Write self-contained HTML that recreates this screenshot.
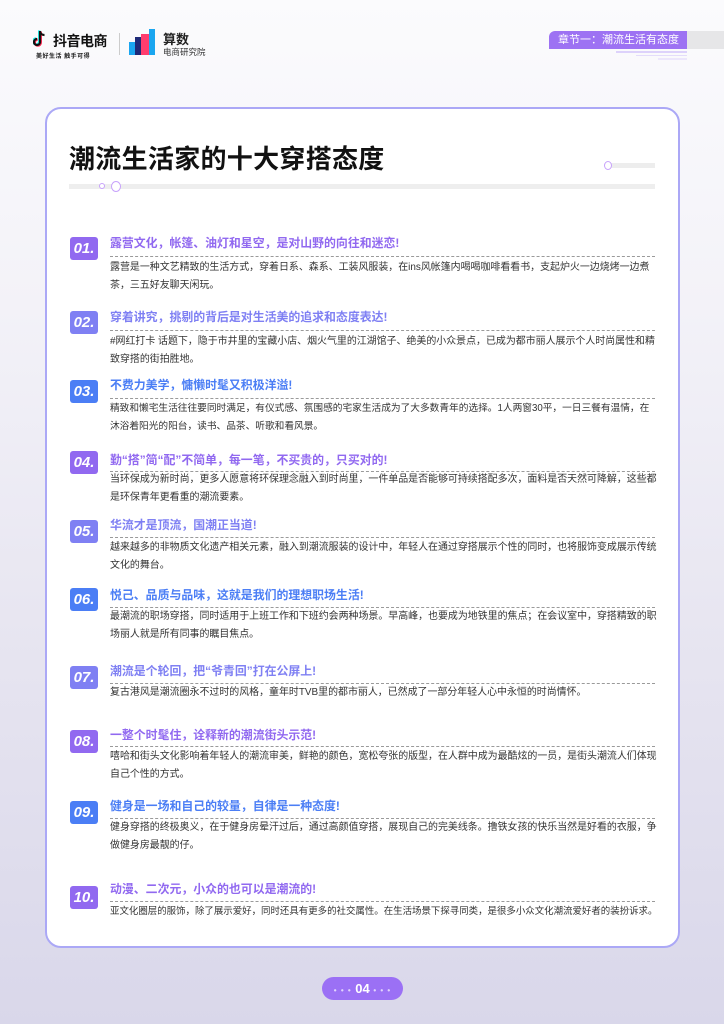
<!DOCTYPE html>
<html><head><meta charset="utf-8"><style>
*{margin:0;padding:0;box-sizing:border-box}
body{width:724px;height:1024px;overflow:hidden;position:relative;font-family:"Liberation Sans","Noto Sans CJK SC",sans-serif;background:linear-gradient(180deg,#fbfbfd 0%,#f3f2f8 30%,#e6e4f0 65%,#d9d7ea 100%)}
.abs{position:absolute}
.card{position:absolute;left:45px;top:107px;width:635px;height:841px;background:#fff;border:2px solid #aba8f6;border-radius:16px}
.badge{position:absolute;left:70px;width:28px;height:23px;border-radius:3px;color:#fff;font:italic bold 15px "Liberation Sans",sans-serif;text-align:center;line-height:23px}
.t{position:absolute;left:110px;font-size:11.9px;font-weight:bold;white-space:nowrap;line-height:14px}
.dl{position:absolute;left:110px;width:545px;border-top:1px dashed #9a9a9a}
.b{position:absolute;left:110px;font-size:9.95px;color:#333;line-height:18px;white-space:nowrap}
.p{background:#9169f0}.p2{background:#7f80f3}.bl{background:#4b7ef5}
.cp{color:#9169f0}.cp2{color:#7f80f3}.cbl{color:#4b7ef5}
</style></head><body>
<svg class="abs" style="left:33px;top:30px" width="14" height="17" viewBox="0 0 14 17"><path d="M7 1v11a3 3 0 1 1-3-3" fill="none" stroke="#25f4ee" stroke-width="2.4" transform="translate(-0.8,-0.6)"/><path d="M7 1v11a3 3 0 1 1-3-3" fill="none" stroke="#fe2c55" stroke-width="2.4" transform="translate(0.8,0.6)"/><path d="M7 1v11a3 3 0 1 1-3-3M7 1c0 2.5 2 4 4.5 4" fill="none" stroke="#111" stroke-width="2.2"/></svg>
<div class="abs" style="left:53px;top:31px;font-size:14px;font-weight:bold;color:#111;letter-spacing:-0.5px">抖音电商</div>
<div class="abs" style="left:36px;top:51px;font-size:6px;font-weight:bold;color:#222;letter-spacing:0.5px">美好生活 触手可得</div>
<div class="abs" style="left:119px;top:33px;width:1px;height:22px;background:#ccc"></div>
<svg class="abs" style="left:129px;top:29px" width="30" height="26" viewBox="0 0 30 26"><rect x="0" y="13" width="10" height="13" fill="#1aa6f0"/><rect x="6" y="8" width="10" height="18" fill="#1e2a78"/><rect x="12" y="5" width="10" height="21" fill="#ff3d6e"/><rect x="20" y="0" width="6" height="26" fill="#1aa6f0"/></svg>
<div class="abs" style="left:163px;top:29px;font-size:13px;font-weight:bold;color:#222">算数</div>
<div class="abs" style="left:163px;top:46px;font-size:8.5px;color:#333">电商研究院</div>
<div class="abs" style="left:680px;top:31px;width:44px;height:18px;background:#e6e6e8"></div>
<div class="abs" style="left:549px;top:31px;width:138px;height:18px;background:#9d72f3;border-radius:6px 0 0 0;color:#fff;font-size:11px;line-height:18px;padding-left:9px">章节一：潮流生活有态度</div>
<div class="abs" style="left:616px;top:51px;width:71px;height:2px;background:#ddd2fb"></div>
<div class="abs" style="left:636px;top:55px;width:51px;height:1px;background:#e4dcfb"></div>
<div class="abs" style="left:658px;top:58px;width:29px;height:2px;background:#ece6fc"></div>
<div class="card"></div>
<div class="abs" style="left:69px;top:139px;font-size:26px;font-weight:bold;color:#111;letter-spacing:0.3px">潮流生活家的十大穿搭态度</div>
<div class="abs" style="left:608px;top:163px;width:47px;height:5px;background:#ededed"></div>
<div class="abs" style="left:604px;top:161px;width:8px;height:9px;border:1.5px solid #c7a2fb;border-radius:50%;background:#fff"></div>
<div class="abs" style="left:69px;top:184px;width:586px;height:5px;background:#eeeeee"></div>
<div class="abs" style="left:99px;top:183px;width:6px;height:6px;border:1.2px solid #c7a2fb;border-radius:50%;background:#fff"></div>
<div class="abs" style="left:111px;top:181px;width:10px;height:11px;border:1.5px solid #c7a2fb;border-radius:50%;background:#fff"></div>

<div class="badge p" style="top:237px">01.</div>
<div class="t cp" style="top:236px">露营文化，帐篷、油灯和星空，是对山野的向往和迷恋!</div>
<div class="dl" style="top:256px"></div>
<div class="b" style="top:259px">露营是一种文艺精致的生活方式，穿着日系、森系、工装风服装，在ins风帐篷内喝喝咖啡看看书，支起炉火一边烧烤一边煮<br>茶，三五好友聊天闲玩。</div>

<div class="badge p2" style="top:311px">02.</div>
<div class="t cp2" style="top:310px">穿着讲究，挑剔的背后是对生活美的追求和态度表达!</div>
<div class="dl" style="top:330px"></div>
<div class="b" style="top:333px">#网红打卡 话题下，隐于市井里的宝藏小店、烟火气里的江湖馆子、绝美的小众景点，已成为都市丽人展示个人时尚属性和精<br>致穿搭的街拍胜地。</div>

<div class="badge bl" style="top:380px">03.</div>
<div class="t cbl" style="top:378px">不费力美学，慵懒时髦又积极洋溢!</div>
<div class="dl" style="top:398px"></div>
<div class="b" style="top:400px;font-size:9.7px">精致和懒宅生活往往要同时满足，有仪式感、氛围感的宅家生活成为了大多数青年的选择。1人两窗30平，一日三餐有温情，在<br>沐浴着阳光的阳台，读书、品茶、听歌和看风景。</div>

<div class="badge p" style="top:451px">04.</div>
<div class="t cp" style="top:453px">勤“搭”简“配”不简单，每一笔，不买贵的，只买对的!</div>
<div class="dl" style="top:471px"></div>
<div class="b" style="top:471px">当环保成为新时尚，更多人愿意将环保理念融入到时尚里，一件单品是否能够可持续搭配多次，面料是否天然可降解，这些都<br>是环保青年更看重的潮流要素。</div>

<div class="badge p2" style="top:520px">05.</div>
<div class="t cp2" style="top:518px">华流才是顶流，国潮正当道!</div>
<div class="dl" style="top:537px"></div>
<div class="b" style="top:539px">越来越多的非物质文化遗产相关元素，融入到潮流服装的设计中，年轻人在通过穿搭展示个性的同时，也将服饰变成展示传统<br>文化的舞台。</div>

<div class="badge bl" style="top:588px">06.</div>
<div class="t cbl" style="top:588px">悦己、品质与品味，这就是我们的理想职场生活!</div>
<div class="dl" style="top:607px"></div>
<div class="b" style="top:608px">最潮流的职场穿搭，同时适用于上班工作和下班约会两种场景。早高峰，也要成为地铁里的焦点；在会议室中，穿搭精致的职<br>场丽人就是所有同事的瞩目焦点。</div>

<div class="badge p2" style="top:666px">07.</div>
<div class="t cp2" style="top:664px">潮流是个轮回，把“爷青回”打在公屏上!</div>
<div class="dl" style="top:683px"></div>
<div class="b" style="top:684px">复古港风是潮流圈永不过时的风格，童年时TVB里的都市丽人，已然成了一部分年轻人心中永恒的时尚情怀。</div>

<div class="badge p" style="top:730px">08.</div>
<div class="t cp" style="top:728px">一整个时髦住，诠释新的潮流街头示范!</div>
<div class="dl" style="top:746px"></div>
<div class="b" style="top:748px">嘻哈和街头文化影响着年轻人的潮流审美，鲜艳的颜色，宽松夸张的版型，在人群中成为最酷炫的一员，是街头潮流人们体现<br>自己个性的方式。</div>

<div class="badge bl" style="top:801px">09.</div>
<div class="t cbl" style="top:799px">健身是一场和自己的较量，自律是一种态度!</div>
<div class="dl" style="top:818px"></div>
<div class="b" style="top:819px">健身穿搭的终极奥义，在于健身房晕汗过后，通过高颜值穿搭，展现自己的完美线条。撸铁女孩的快乐当然是好看的衣服，争<br>做健身房最靓的仔。</div>

<div class="badge p" style="top:886px">10.</div>
<div class="t cp" style="top:882px">动漫、二次元，小众的也可以是潮流的!</div>
<div class="dl" style="top:901px"></div>
<div class="b" style="top:903px;font-size:9.45px">亚文化圈层的服饰，除了展示爱好，同时还具有更多的社交属性。在生活场景下探寻同类，是很多小众文化潮流爱好者的装扮诉求。</div>

<div class="abs" style="left:322px;top:977px;width:81px;height:23px;border-radius:12px;background:#9b70f5;color:#fff;font-weight:bold;font-size:13px;text-align:center;line-height:23px"><span style="font-size:8px;opacity:.7;letter-spacing:1px">• • •</span> 04 <span style="font-size:8px;opacity:.7;letter-spacing:1px">• • •</span></div>
</body></html>
